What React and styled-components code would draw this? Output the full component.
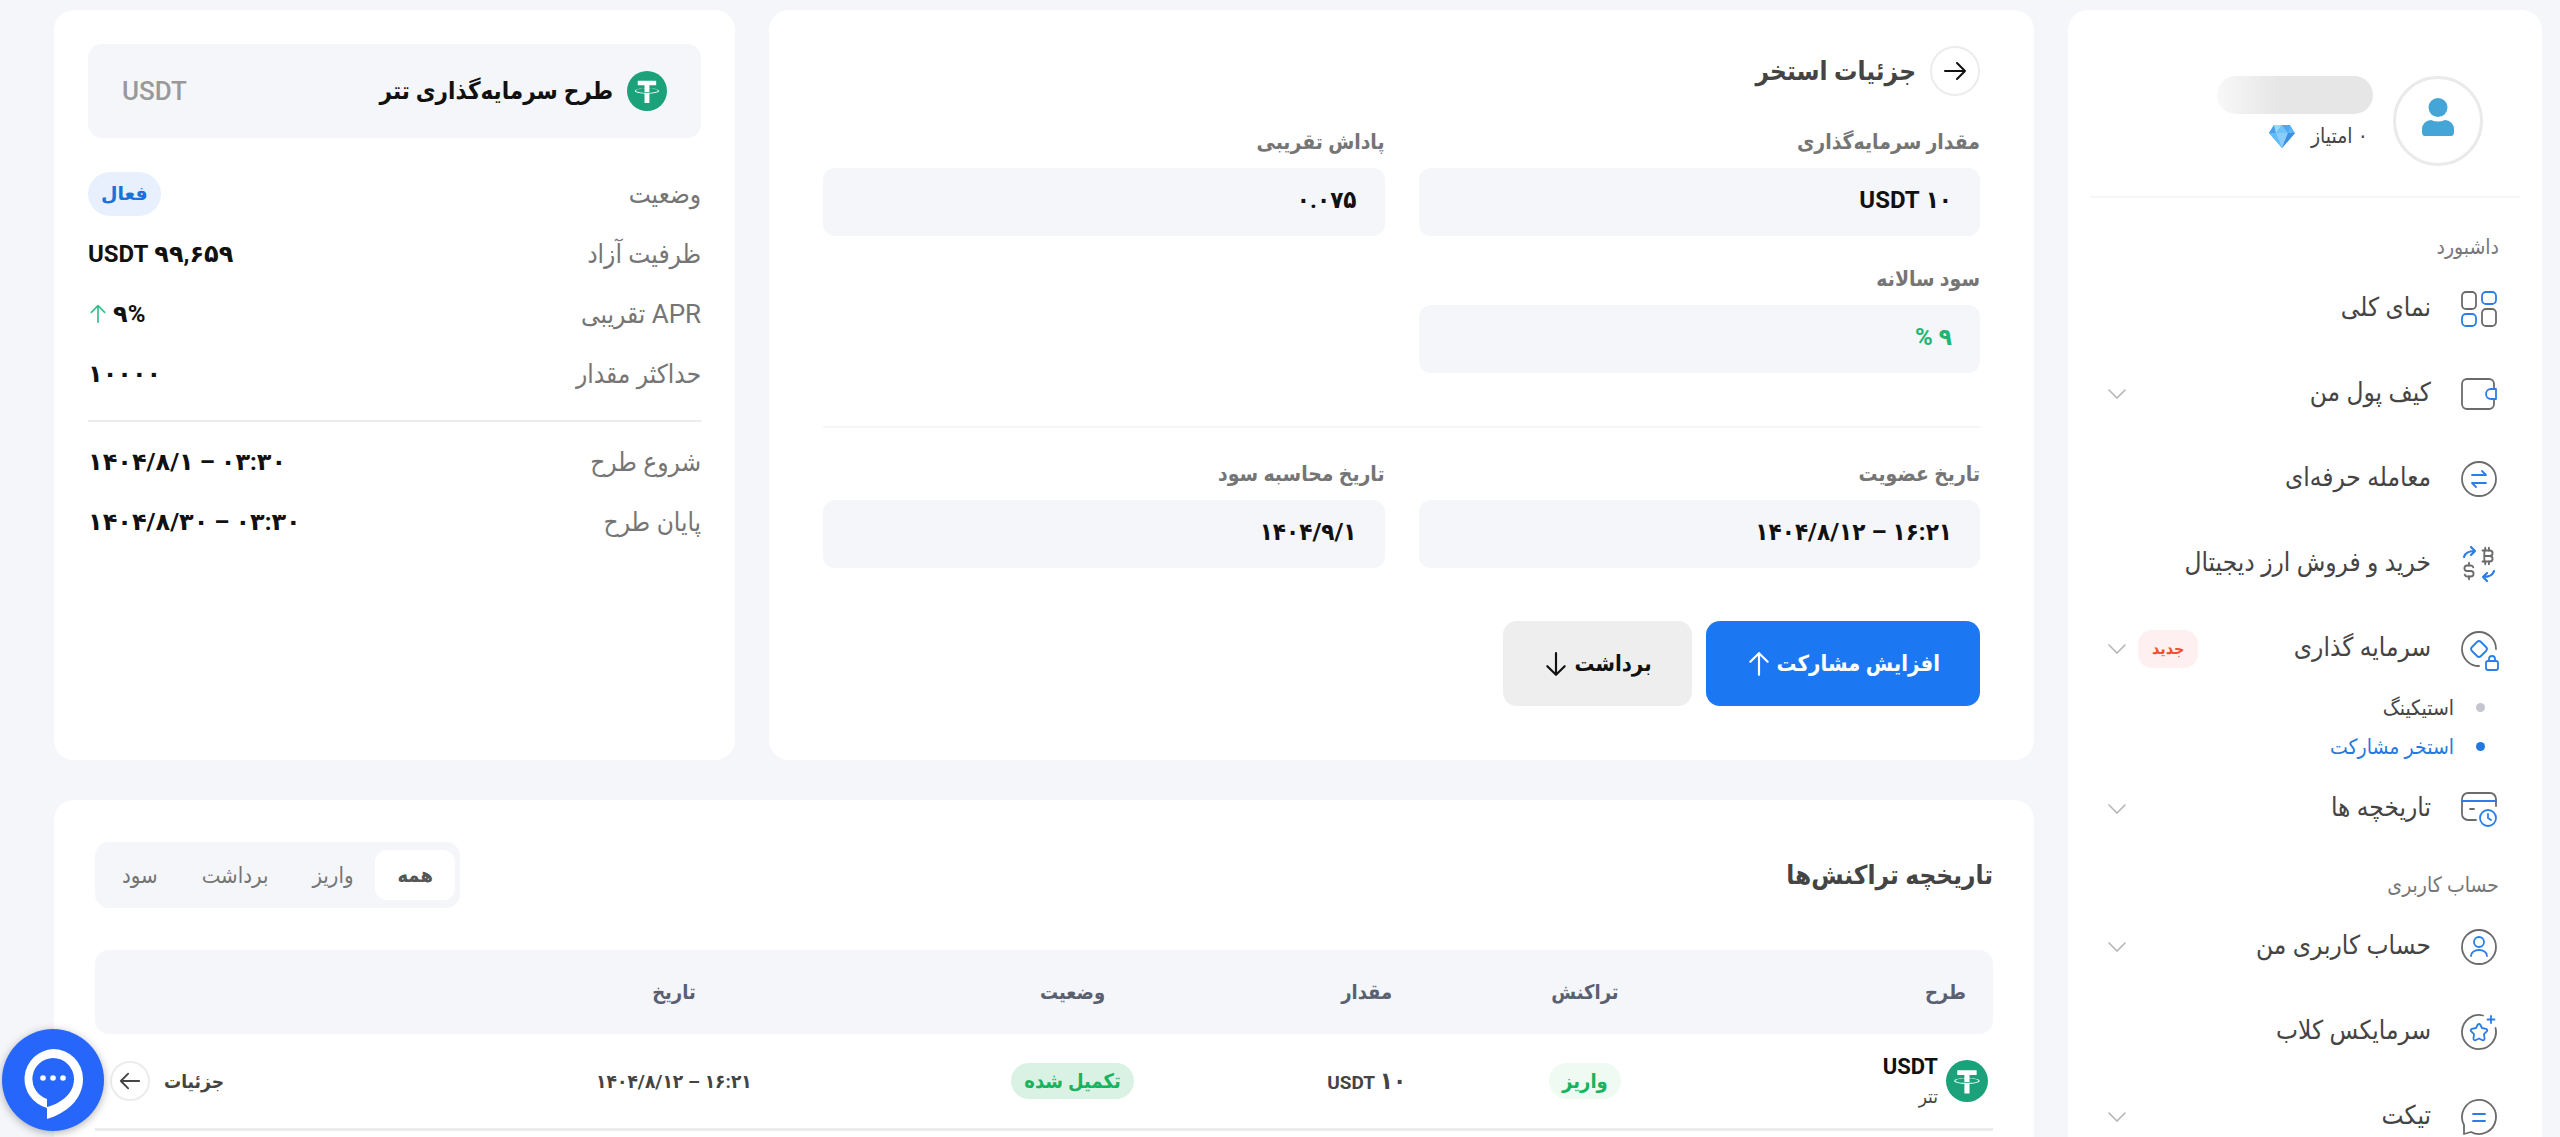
import React, { useState } from "react";
import styled, { createGlobalStyle } from "styled-components";
import { TbCurrencyBitcoin, TbCurrencyDollar } from "react-icons/tb";

const DARK = "#6b6b6b";
const BLUE = "#2b7de9";

const GlobalStyle = createGlobalStyle`
  * {
    box-sizing: border-box;
  }
  body {
    margin: 0;
    background: #f4f6fa;
    color: #444;
    font-family: Roboto, "DejaVu Sans Condensed", "DejaVu Sans", sans-serif;
    font-size: 21px;
  }
  h1, h2, p, ul, dl, dd {
    margin: 0;
    padding: 0;
  }
  ul {
    list-style: none;
  }
  a {
    color: inherit;
    text-decoration: none;
  }
  button {
    font-family: inherit;
    cursor: pointer;
  }
`;

const MenuIcon = ({ children }) => (
  <svg width="36" height="36" viewBox="0 0 36 36" overflow="visible" fill="none" stroke={DARK} strokeWidth="1.8" strokeLinecap="round" strokeLinejoin="round">
    {children}
  </svg>
);

const OverviewIcon = () => (
  <MenuIcon>
    <rect x="1" y="1" width="14" height="17" rx="4" />
    <rect x="21" y="18" width="14" height="17" rx="4" />
    <rect x="21" y="1" width="14" height="12" rx="4" stroke={BLUE} />
    <rect x="1" y="23" width="14" height="12" rx="4" stroke={BLUE} />
  </MenuIcon>
);

const WalletIcon = () => (
  <MenuIcon>
    <path d="M33 13V8a5 5 0 0 0-5-5H6a5 5 0 0 0-5 5v20a5 5 0 0 0 5 5h22a5 5 0 0 0 5-5v-5" />
    <path d="M35 13h-5a5 5 0 0 0 0 10h5z" stroke={BLUE} />
  </MenuIcon>
);

const TradeIcon = () => (
  <MenuIcon>
    <circle cx="18" cy="18" r="17" />
    <path d="M11 14h14l-4-4M25 22H11l4 4" stroke={BLUE} />
  </MenuIcon>
);

const ExchangeIcon = () => (
  <MenuIcon>
    <TbCurrencyBitcoin x="16" y="-1" size={22} color={DARK} />
    <TbCurrencyDollar x="-3" y="14" size={22} color={DARK} />
    <path d="M3 11c1-4 5-6 11-6M10 1l4 4-4 4" stroke={BLUE} strokeWidth="2.2" />
    <path d="M33 25c-1 4-5 6-11 6M26 27l-4 4 4 4" stroke={BLUE} strokeWidth="2.2" />
  </MenuIcon>
);

const InvestIcon = () => (
  <MenuIcon>
    <path d="M35 18A17 17 0 1 0 18 35" />
    <path d="M16 11q2-2 4 0l5 5q2 2 0 4l-5 5q-2 2-4 0l-5-5q-2-2 0-4z" stroke={BLUE} />
    <rect x="25" y="30" width="12" height="9" rx="2" stroke={BLUE} />
    <path d="M28 30v-2a3 3 0 0 1 6 0v2" stroke={BLUE} />
  </MenuIcon>
);

const HistoryIcon = () => (
  <MenuIcon>
    <path d="M35 15V8a6 6 0 0 0-6-6H7a6 6 0 0 0-6 6v15a6 6 0 0 0 6 6h8M9 18h4" />
    <path d="M1 10h34" stroke={BLUE} />
    <circle cx="27" cy="27" r="8" stroke={BLUE} />
    <path d="M27 23v4l3 2" stroke={BLUE} />
  </MenuIcon>
);

const AccountIcon = () => (
  <MenuIcon>
    <circle cx="18" cy="18" r="17" />
    <circle cx="18" cy="13" r="5" stroke={BLUE} />
    <path d="M10 27c0-8 16-8 16 0" stroke={BLUE} />
  </MenuIcon>
);

const ClubIcon = () => (
  <MenuIcon>
    <path d="M22 1.500A17 17 0 1 0 34.500 14" />
    <path d="M30 2v7M26.500 5.500h7" stroke={BLUE} />
    <path d="M16.500 11q1.500-2 3 0l1.500 3 4 .8q2 .8 1 2.400l-3 3 .5 4q0 2.500-2 2L18 24.500l-3.500 1.700q-2 .5-2-2l.5-4-3-3q-1-1.600 1-2.400l4-.8z" stroke={BLUE} />
  </MenuIcon>
);

const TicketIcon = () => (
  <MenuIcon>
    <path d="M3 26A17 17 0 1 1 10 33l-7 2z" />
    <path d="M12 15h12M12 22h12" stroke={BLUE} />
  </MenuIcon>
);

const ArrowIcon = ({ angle = 0, size = 26, color = "currentColor", width = 2 }) => (
  <svg width={size} height={size} viewBox="0 0 24 24" fill="none" stroke={color} strokeWidth={width} strokeLinecap="round" strokeLinejoin="round">
    <path d="M2 12h20M14 4l8 8-8 8" transform={`rotate(${angle} 12 12)`} />
  </svg>
);

const ChevronIcon = () => (
  <svg width="18" height="10" viewBox="0 0 18 10" fill="none" stroke="#b5b5b5" strokeWidth="1.6" strokeLinecap="round">
    <path d="M1 1l8 8 8-8" />
  </svg>
);

const TetherIcon = ({ size }) => (
  <svg width={size} height={size} viewBox="0 0 32 32">
    <circle cx="16" cy="16" r="16" fill="#1ba27a" />
    <path
      fill="#fff"
      d="M17.922 17.383v-.002c-.11.008-.677.042-1.942.042-1.010 0-1.721-.030-1.971-.042v.003c-3.888-.171-6.790-.848-6.790-1.658 0-.809 2.902-1.486 6.790-1.660v2.644c.254.018.982.061 1.988.061 1.207 0 1.812-.050 1.925-.060v-2.643c3.880.173 6.775.850 6.775 1.658 0 .810-2.895 1.485-6.775 1.657m0-3.590v-2.366h5.414V7.819H8.595v3.608h5.414v2.365c-4.400.202-7.709 1.074-7.709 2.118 0 1.044 3.309 1.915 7.709 2.118v7.582h3.913v-7.584c4.393-.202 7.694-1.073 7.694-2.116 0-1.043-3.301-1.914-7.694-2.117"
    />
  </svg>
);

const DiamondIcon = () => (
  <svg width="26" height="23" viewBox="0 0 26 23">
    <path d="M5 0h16l5 8-13 15L0 8z" fill="#5ab4f5" />
    <path d="M5 0L0 8h7z" fill="#4a9fe8" />
    <path d="M5 0h8L7 8z" fill="#9bd8fb" />
    <path d="M13 0L7 8h12z" fill="#6fc3f8" />
    <path d="M21 0h-8l6 8z" fill="#4fa8ef" />
    <path d="M0 8h7l6 15z" fill="#62bdf7" />
    <path d="M7 8h12l-6 15z" fill="#8accfa" />
    <path d="M26 8h-7l-6 15z" fill="#3f8fe0" />
  </svg>
);

const AvatarIcon = () => (
  <svg width="34" height="38" viewBox="0 0 34 38" fill="#45a5d6">
    <circle cx="17" cy="9.500" r="9.500" />
    <path d="M1 34v-3a9 9 0 0 1 9-9q7 3 14 0a9 9 0 0 1 9 9v3q0 4-3 4H4q-3 0-3-4z" />
  </svg>
);

const ChatIcon = () => (
  <svg width="60" height="70" viewBox="0 0 60 70">
    <path fill="#fff" fillRule="evenodd" d="M30 0a30 30 0 0 1 30 30c0 20-16 34-36 40V59A30 30 0 0 1 30 0zm0 9a21 21 0 0 0-6 41v8c15-4 27-14 27-28A21 21 0 0 0 30 9z" />
    <circle cx="20" cy="29" r="2.8" fill="#fff" />
    <circle cx="30" cy="29" r="2.8" fill="#fff" />
    <circle cx="40" cy="29" r="2.8" fill="#fff" />
  </svg>
);

const dashboardMenu = [
  { label: "نمای کلی", icon: OverviewIcon },
  { label: "کیف پول من", icon: WalletIcon, arrow: true },
  { label: "معامله حرفه‌ای", icon: TradeIcon },
  { label: "خرید و فروش ارز دیجیتال", icon: ExchangeIcon },
  {
    label: "سرمایه گذاری",
    icon: InvestIcon,
    arrow: true,
    badge: "جدید",
    items: [{ label: "استیکینگ" }, { label: "استخر مشارکت", active: true }],
  },
  { label: "تاریخچه ها", icon: HistoryIcon, arrow: true },
];

const accountMenu = [
  { label: "حساب کاربری من", icon: AccountIcon, arrow: true },
  { label: "سرمایکس کلاب", icon: ClubIcon },
  { label: "تیکت", icon: TicketIcon, arrow: true },
];

const poolFields = [
  { label: "مقدار سرمایه‌گذاری", value: "۱۰ USDT" },
  { label: "پاداش تقریبی", value: "۰.۰۷۵" },
  { label: "سود سالانه", value: "۹ %", green: true },
];

const dateFields = [
  { label: "تاریخ عضویت", value: "۱۴۰۴/۸/۱۲ – ۱۶:۲۱" },
  { label: "تاریخ محاسبه سود", value: "۱۴۰۴/۹/۱" },
];

const tabs = ["همه", "واریز", "برداشت", "سود"];

function Menu({ items }) {
  return (
    <ul>
      {items.map(({ label, icon: Icon, arrow, badge, items: children }) => (
        <li key={label}>
          <MenuLink href="#">
            <Icon />
            <MenuLabel>{label}</MenuLabel>
            {badge && <NewBadge>{badge}</NewBadge>}
            {arrow && <ChevronIcon />}
          </MenuLink>
          {children && (
            <SubMenu>
              {children.map((child) => (
                <li key={child.label}>
                  <SubLink href="#" $active={child.active}>
                    {child.label}
                  </SubLink>
                </li>
              ))}
            </SubMenu>
          )}
        </li>
      ))}
    </ul>
  );
}

function Fields({ items }) {
  return (
    <FieldGrid>
      {items.map(({ label, value, green }) => (
        <div key={label}>
          <FieldLabel>{label}</FieldLabel>
          <FieldValue $green={green}>
            {value.includes("/") ? <bdi dir="ltr">{value}</bdi> : value}
          </FieldValue>
        </div>
      ))}
    </FieldGrid>
  );
}

function App() {
  const [tab, setTab] = useState("همه");

  return (
    <Page dir="rtl" lang="fa">
      <GlobalStyle />
      <Sidebar>
        <Profile>
          <Avatar>
            <AvatarIcon />
          </Avatar>
          <ProfileInfo>
            <HiddenName />
            <Points>
              ۰ امتیاز
              <DiamondIcon />
            </Points>
          </ProfileInfo>
        </Profile>
        <Nav>
          <MenuTitle>داشبورد</MenuTitle>
          <Menu items={dashboardMenu} />
          <MenuTitle>حساب کاربری</MenuTitle>
          <Menu items={accountMenu} />
        </Nav>
      </Sidebar>

      <Main>
        <PoolCard>
          <PoolHeader>
            <RoundLink href="#" aria-label="بازگشت" $size={50}>
              <ArrowIcon size={24} color="#111" />
            </RoundLink>
            <Title>جزئیات استخر</Title>
          </PoolHeader>
          <Fields items={poolFields} />
          <Divider $top={53} $bottom={32} />
          <Fields items={dateFields} />
          <Actions>
            <ActionButton $primary>
              افزایش مشارکت
              <ArrowIcon angle={-90} />
            </ActionButton>
            <ActionButton>
              برداشت
              <ArrowIcon angle={90} />
            </ActionButton>
          </Actions>
        </PoolCard>

        <PlanCard>
          <PlanHeader>
            <TetherIcon size={40} />
            <PlanTitle>طرح سرمایه‌گذاری تتر</PlanTitle>
            <PlanSymbol>USDT</PlanSymbol>
          </PlanHeader>
          <PlanList>
            <PlanRow>
              <dt>وضعیت</dt>
              <dd><ActiveBadge>فعال</ActiveBadge></dd>
            </PlanRow>
            <PlanRow>
              <dt>ظرفیت آزاد</dt>
              <dd>۹۹,۶۵۹ USDT</dd>
            </PlanRow>
            <PlanRow>
              <dt>APR تقریبی</dt>
              <dd>
                ۹%
                <ArrowIcon angle={-90} size={20} color="#2fc08a" />
              </dd>
            </PlanRow>
            <PlanRow>
              <dt>حداکثر مقدار</dt>
              <dd>۱۰۰۰۰</dd>
            </PlanRow>
          </PlanList>
          <Divider $top={16} $bottom={10} $dark />
          <PlanList>
            <PlanRow>
              <dt>شروع طرح</dt>
              <dd><bdi dir="ltr">۱۴۰۴/۸/۱ – ۰۳:۳۰</bdi></dd>
            </PlanRow>
            <PlanRow>
              <dt>پایان طرح</dt>
              <dd><bdi dir="ltr">۱۴۰۴/۸/۳۰ – ۰۳:۳۰</bdi></dd>
            </PlanRow>
          </PlanList>
        </PlanCard>

        <HistoryCard>
          <HistoryHeader>
            <Title>تاریخچه تراکنش‌ها</Title>
            <Tabs role="tablist">
              {tabs.map((name) => (
                <Tab key={name} role="tab" aria-selected={tab === name} $active={tab === name} onClick={() => setTab(name)}>
                  {name}
                </Tab>
              ))}
            </Tabs>
          </HistoryHeader>
          <Table>
            <colgroup>
              <Col $width={16} />
              <Col $width={11} />
              <Col $width={12} />
              <Col $width={19} />
              <Col $width={23} />
              <Col $width={19} />
            </colgroup>
            <thead>
              <tr>
                <th>طرح</th>
                <th>تراکنش</th>
                <th>مقدار</th>
                <th>وضعیت</th>
                <th>تاریخ</th>
                <th />
              </tr>
            </thead>
            <tbody>
              <tr>
                <td>
                  <Coin>
                    <TetherIcon size={42} />
                    <div>
                      <CoinSymbol>USDT</CoinSymbol>
                      <CoinName>تتر</CoinName>
                    </div>
                  </Coin>
                </td>
                <td><StatusBadge>واریز</StatusBadge></td>
                <td><Amount>۱۰</Amount> USDT</td>
                <td><StatusBadge $filled>تکمیل شده</StatusBadge></td>
                <td><bdi dir="ltr">۱۴۰۴/۸/۱۲ – ۱۶:۲۱</bdi></td>
                <td>
                  <Details href="#">
                    جزئیات
                    <RoundIcon $size={40}>
                      <ArrowIcon angle={180} size={22} color="#444" />
                    </RoundIcon>
                  </Details>
                </td>
              </tr>
            </tbody>
          </Table>
        </HistoryCard>
      </Main>

      <ChatButton aria-label="گفتگو">
        <ChatIcon />
      </ChatButton>
    </Page>
  );
}

const Page = styled.div`
  display: flex;
  gap: 34px;
  height: 100vh;
  padding: 10px 18px 0 54px;
  overflow: hidden;
`;

const Card = styled.section`
  background: #fff;
  border-radius: 20px;
`;

const Sidebar = styled.aside`
  flex: 0 0 474px;
  padding: 0 22px;
  background: #fff;
  border-radius: 20px 20px 0 0;
`;

const Profile = styled.div`
  display: flex;
  align-items: center;
  gap: 20px;
  padding: 66px 37px 30px;
  border-bottom: 2px solid #f6f6f6;
`;

const Avatar = styled.div`
  display: flex;
  align-items: center;
  justify-content: center;
  width: 90px;
  height: 90px;
  padding-bottom: 8px;
  border: 3px solid #eaeaea;
  border-radius: 50%;
`;

const ProfileInfo = styled.div`
  height: 90px;
`;

const HiddenName = styled.div`
  width: 156px;
  height: 38px;
  border-radius: 19px;
  background: linear-gradient(to left, #e6e6e6 60%, #f8f8f8);
`;

const Points = styled.div`
  display: flex;
  align-items: center;
  gap: 16px;
  height: 44px;
  padding: 0 5px;
`;

const Nav = styled.nav`
  padding-top: 15px;
`;

const MenuTitle = styled.p`
  padding: 0 21px;
  color: #777;
  line-height: 24px;
  margin: 22px 0 7px;
`;

const MenuLink = styled.a`
  display: flex;
  align-items: center;
  height: 85px;
  padding: 0 23px 0 18px;
  gap: 12px;
`;

const MenuLabel = styled.span`
  flex: 1;
  padding: 0 18px 4px 0;
  font-size: 26px;
`;

const NewBadge = styled.span`
  padding: 0 14px;
  border-radius: 14px;
  background: #fef0f0;
  color: #f05033;
  font-size: 16px;
  font-weight: bold;
  line-height: 38px;
`;

const SubMenu = styled.ul`
  margin-top: -3px;
`;

const SubLink = styled.a`
  display: flex;
  align-items: center;
  gap: 22px;
  height: 39px;
  padding-right: 35px;
  color: ${(props) => (props.$active ? "#2479e0" : "#444")};
  &::before {
    content: "";
    width: 9px;
    height: 9px;
    border-radius: 50%;
    background: ${(props) => (props.$active ? "#2479e0" : "#c5c5d0")};
  }
`;

const Main = styled.main`
  flex: 1;
  min-width: 0;
  display: grid;
  grid-template-columns: 13fr 7fr;
  grid-template-rows: auto 1fr;
  gap: 40px 34px;
`;

const PoolCard = styled(Card)`
  padding: 36px 54px 54px;
`;

const PoolHeader = styled.div`
  display: flex;
  align-items: center;
  gap: 14px;
  margin-bottom: 32px;
`;

const Title = styled.h2`
  color: #444;
  font-size: 26px;
`;

const RoundLink = styled.a`
  display: flex;
  align-items: center;
  justify-content: center;
  width: ${(props) => props.$size}px;
  height: ${(props) => props.$size}px;
  border: 2px solid #ececec;
  border-radius: 50%;
`;

const RoundIcon = styled(RoundLink).attrs({ as: "span" })``;

const FieldGrid = styled.dl`
  display: grid;
  grid-template-columns: 1fr 1fr;
  gap: 29px 34px;
`;

const FieldLabel = styled.dt`
  height: 40px;
  color: #757575;
  font-size: 21px;
  font-weight: bold;
  line-height: 28px;
`;

const FieldValue = styled.dd`
  padding: 0 28px 4px;
  border-radius: 12px;
  background: #f4f6fa;
  color: ${(props) => (props.$green ? "#1fb574" : "#111")};
  font-size: 24px;
  font-weight: bold;
  line-height: 64px;
`;

const Divider = styled.hr`
  border: 0;
  border-top: 2px solid ${(props) => (props.$dark ? "#ececec" : "#f5f5f5")};
  margin: ${(props) => props.$top}px 0 ${(props) => props.$bottom}px;
`;

const Actions = styled.div`
  display: flex;
  gap: 14px;
  margin-top: 53px;
`;

const ActionButton = styled.button`
  display: flex;
  align-items: center;
  gap: 5px;
  height: 85px;
  padding: 0 40px;
  border: 0;
  border-radius: 14px;
  background: ${(props) => (props.$primary ? "#1b78f2" : "#eee")};
  color: ${(props) => (props.$primary ? "#fff" : "#111")};
  font-size: 22px;
  font-weight: bold;
`;

const PlanCard = styled(Card)`
  padding: 34px 34px 0;
`;

const PlanHeader = styled.div`
  display: flex;
  align-items: center;
  gap: 14px;
  height: 94px;
  padding: 0 34px;
  border-radius: 14px;
  background: #f4f6fa;
`;

const PlanTitle = styled.h1`
  flex: 1;
  color: #111;
  font-size: 24px;
`;

const PlanSymbol = styled.span`
  color: #999;
  font-size: 26px;
  font-weight: 500;
`;

const PlanList = styled.dl`
  &:first-of-type {
    margin-top: 26px;
  }
`;

const PlanRow = styled.div`
  display: flex;
  align-items: center;
  justify-content: space-between;
  height: 60px;
  dt {
    color: #757575;
    font-size: 26px;
  }
  dd {
    display: flex;
    align-items: center;
    gap: 5px;
    color: #111;
    font-family: Roboto, "DejaVu Sans", sans-serif;
    font-size: 24px;
    font-weight: bold;
  }
`;

const ActiveBadge = styled.span`
  padding: 0 13px;
  border-radius: 22px;
  background: #e8f0fe;
  color: #1a73d9;
  font-size: 19px;
  line-height: 44px;
`;

const HistoryCard = styled(Card)`
  grid-column: 1 / -1;
  padding: 42px 41px 0;
  border-radius: 20px 20px 0 0;
`;

const HistoryHeader = styled.div`
  display: flex;
  align-items: center;
  justify-content: space-between;
  margin-bottom: 42px;
`;

const Tabs = styled.div`
  display: flex;
  height: 66px;
  padding: 8px 5px;
  border-radius: 14px;
  background: #f4f6f9;
`;

const Tab = styled.button`
  padding: 0 22px;
  border: 0;
  border-radius: 12px;
  background: ${(props) => (props.$active ? "#fff" : "transparent")};
  color: ${(props) => (props.$active ? "#555" : "#757575")};
  font-size: ${(props) => (props.$active ? 20 : 22)}px;
  font-weight: ${(props) => (props.$active ? "bold" : "normal")};
`;

const Table = styled.table`
  width: 100%;
  table-layout: fixed;
  border-collapse: separate;
  border-spacing: 0;
  color: #444;
  font-size: 19px;
  font-weight: bold;
  th {
    height: 84px;
    padding: 0;
    background: #f4f6fa;
    color: #5a6070;
    font-size: 20px;
    text-align: center;
  }
  th:first-child {
    padding-right: 27px;
    border-radius: 0 14px 14px 0;
    text-align: right;
  }
  th:last-child {
    border-radius: 14px 0 0 14px;
  }
  td {
    height: 97px;
    padding: 0;
    border-bottom: 3px solid #ececec;
    text-align: center;
  }
`;

const Col = styled.col`
  width: ${(props) => props.$width}%;
`;

const Coin = styled.div`
  display: flex;
  align-items: center;
  gap: 8px;
  padding-right: 5px;
  text-align: right;
`;

const CoinSymbol = styled.p`
  color: #111;
  font-size: 22px;
  line-height: 32px;
`;

const CoinName = styled.p`
  font-size: 19px;
  font-weight: normal;
  line-height: 28px;
`;

const StatusBadge = styled.span`
  display: inline-block;
  padding: 0 13px;
  border-radius: 18px;
  background: ${(props) => (props.$filled ? "#d9f2e3" : "#effaf3")};
  color: #17b35f;
  font-size: 20px;
  line-height: 36px;
`;

const Amount = styled.span`
  font-size: 24px;
`;

const Details = styled.a`
  display: flex;
  align-items: center;
  justify-content: flex-end;
  gap: 14px;
  padding-left: 15px;
`;

const ChatButton = styled.button`
  position: fixed;
  left: 2px;
  bottom: 6px;
  display: flex;
  align-items: center;
  justify-content: center;
  width: 102px;
  height: 102px;
  padding: 8px 0 0;
  border: 0;
  border-radius: 50%;
  background: #2666fb;
  box-shadow: 0 2px 8px rgba(0, 0, 0, 0.3);
`;

export default App;
